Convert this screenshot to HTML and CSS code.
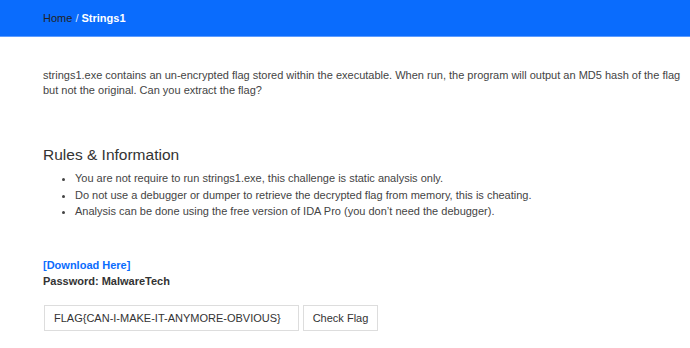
FILE: index.html
```html
<!DOCTYPE html>
<html lang="en">
<head>
    <meta charset="UTF-8">
    <title>Strings1</title>
    <link rel="stylesheet" href="styles.css">
</head>
<body>

    <header class="topbar">
        <nav class="breadcrumb">
            <a href="#">Home</a> <span class="sep">/</span> <span class="current">Strings1</span>
        </nav>
    </header>

    <div class="content">
        <p class="desc">
            strings1.exe contains an un-encrypted flag stored within the executable. When run, the program will output an MD5 hash of the flag
            but not the original. Can you extract the flag?
        </p>

        <h2>Rules &amp; Information</h2>
        <ul class="rules">
            <li>You are not require to run strings1.exe, this challenge is static analysis only.</li>
            <li>Do not use a debugger or dumper to retrieve the decrypted flag from memory, this is cheating.</li>
            <li>Analysis can be done using the free version of IDA Pro (you don’t need the debugger).</li>
        </ul>

        <div class="download">
            <a href="#">[Download Here]</a><br>
            Password: MalwareTech
        </div>

        <form class="flag-form">
            <input type="text" class="flag-input" value="FLAG{CAN-I-MAKE-IT-ANYMORE-OBVIOUS}">
            <button type="button" class="flag-button">Check Flag</button>
        </form>
    </div>

</body>
</html>
```

FILE: styles.css
```css
body {
    font-family: "Liberation Sans", Arial, sans-serif;
    font-size: 11px;
    color: #444;
    margin: 0;
    background-color: #fff;
}
.topbar {
    background-color: #0a6cfd;
    height: 36px;
    border-bottom: 1px solid #5c9cff;
    padding: 0 43px;
    display: flex;
    align-items: center;
}
.breadcrumb {
    font-size: 11px;
    color: #dfe9ff;
}
.breadcrumb a {
    color: #222;
    text-decoration: none;
}
.breadcrumb .current {
    color: #fff;
    font-weight: bold;
}
.content {
    padding: 0 6px 0 43px;
}
.desc {
    margin: 31px 0 0;
    line-height: 14.5px;
}
h2 {
    font-size: 15.5px;
    font-weight: normal;
    color: #333;
    margin: 49px 0 0;
}
.rules {
    margin: 6px 0 0;
    padding-left: 32px;
    line-height: 16.5px;
}
.download {
    margin-top: 37px;
    font-weight: bold;
    color: #333;
    line-height: 16px;
}
.download a {
    color: #0a6cfd;
    text-decoration: none;
}
.flag-form {
    margin-top: 16px;
    display: flex;
    gap: 4px;
}
.flag-input {
    width: 255px;
    height: 26px;
    box-sizing: border-box;
    border: 1px solid #ddd;
    padding: 0 9px;
    font-family: "Liberation Sans", Arial, sans-serif;
    font-size: 11px;
    color: #333;
    margin: 0 0 0 1px;
}
.flag-button {
    height: 26px;
    width: 75px;
    border: 1px solid #ddd;
    background-color: #fff;
    font-family: "Liberation Sans", Arial, sans-serif;
    font-size: 11px;
    color: #333;
    padding: 0;
}
```
